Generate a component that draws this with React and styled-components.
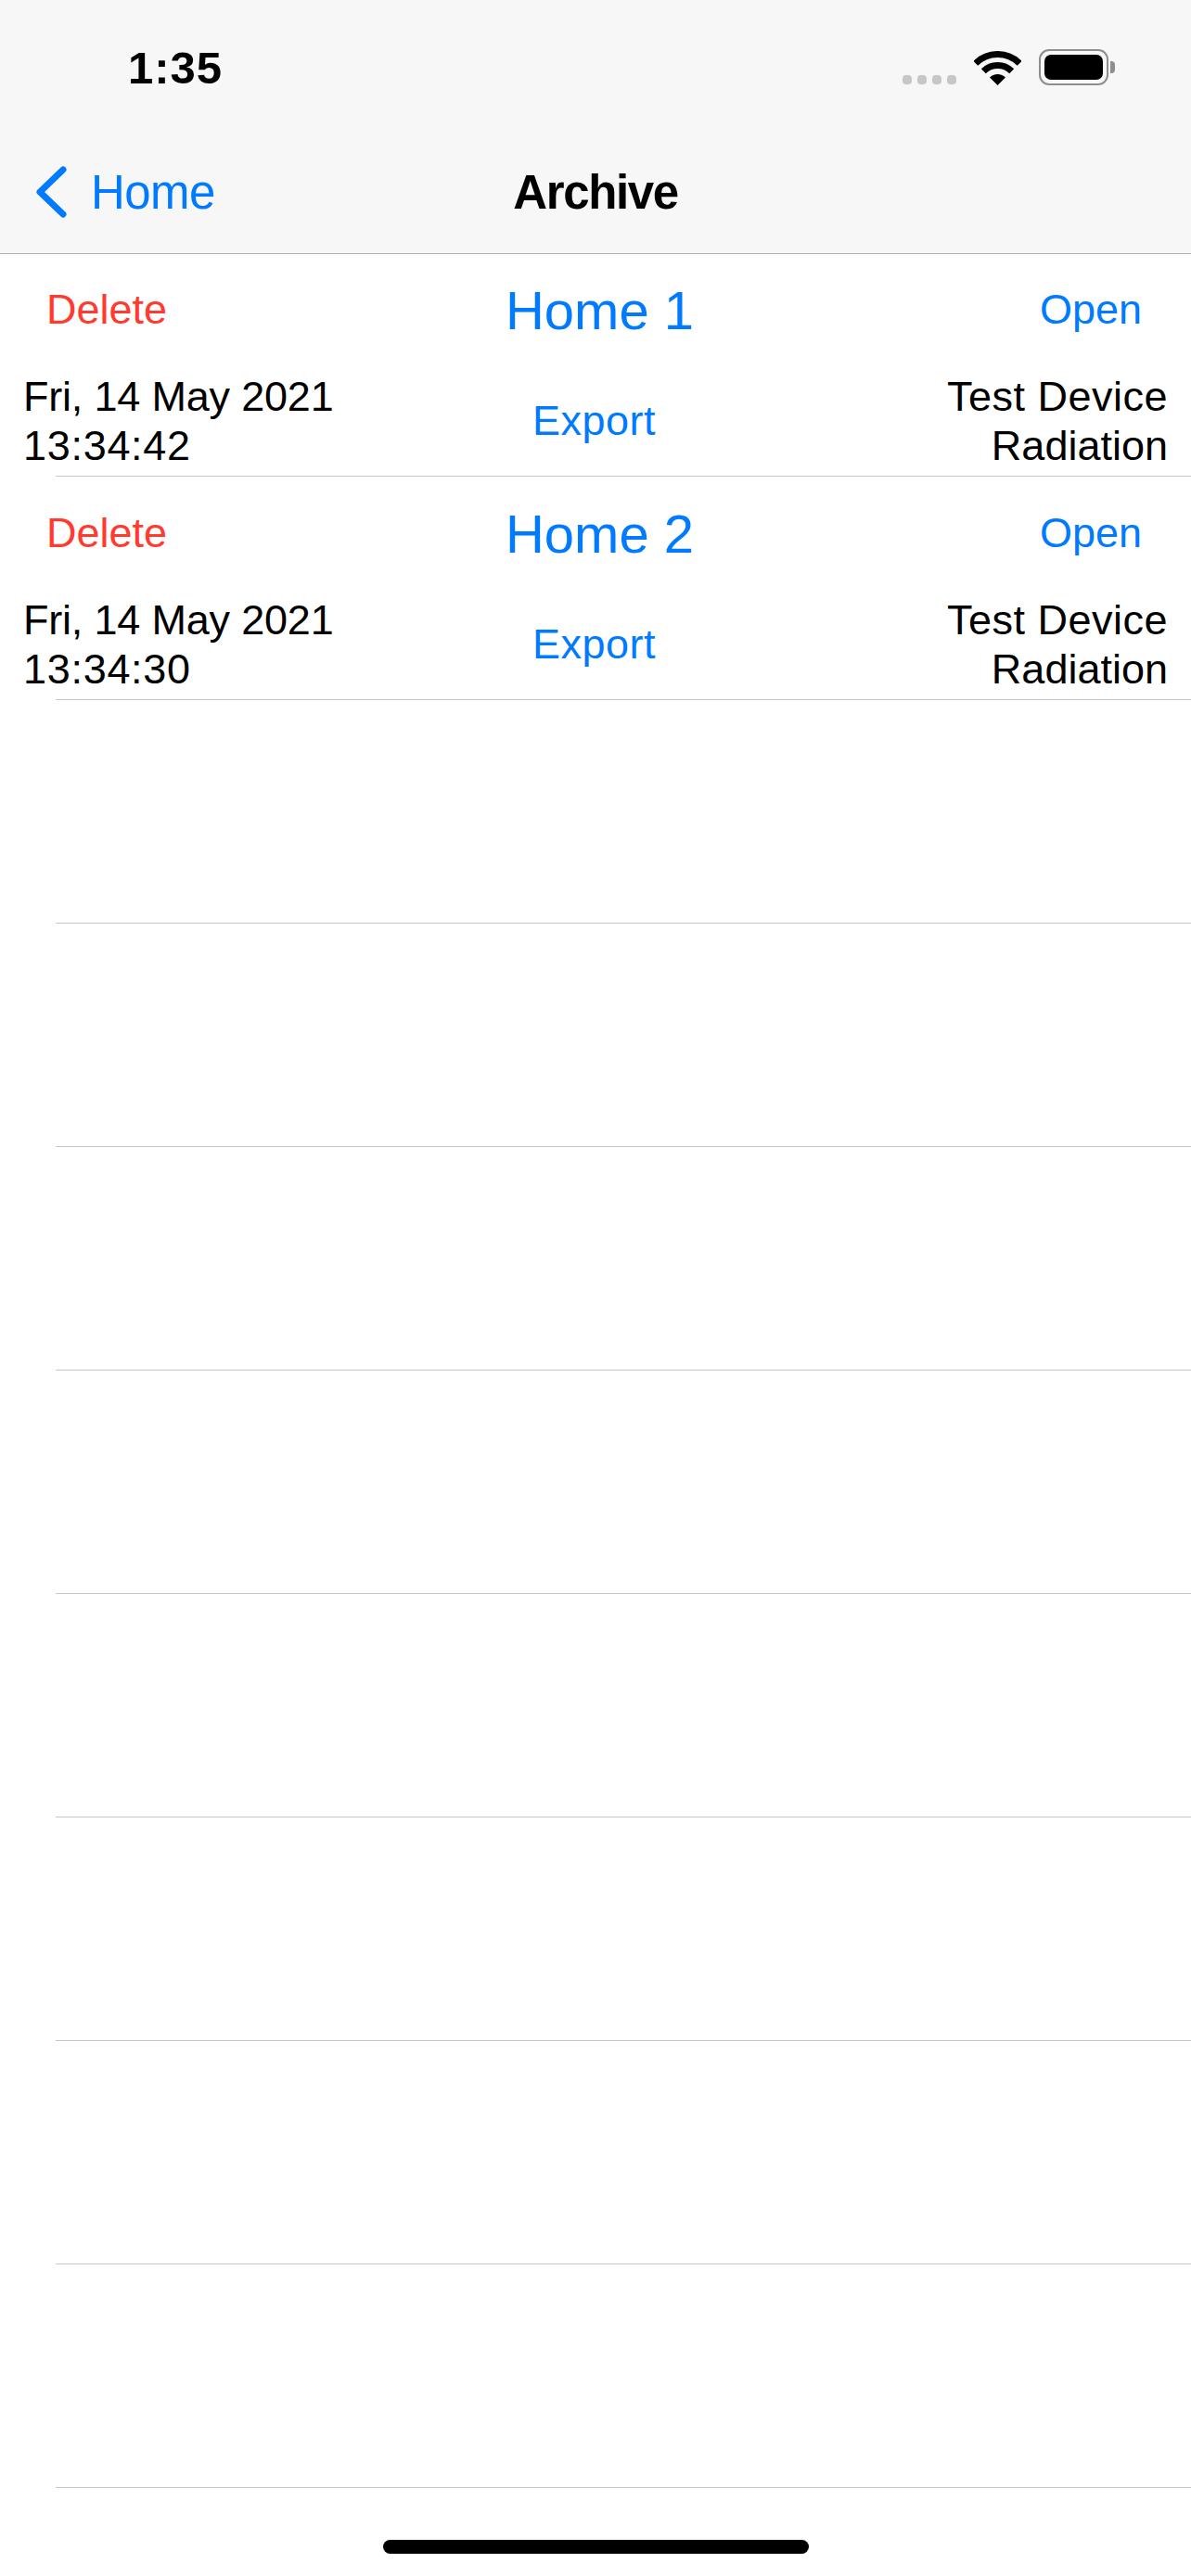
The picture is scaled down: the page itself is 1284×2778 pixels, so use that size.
import React from "react";
import styled, { createGlobalStyle } from "styled-components";

const archives = [
  { name: "Home 1", date: "Fri, 14 May 2021", time: "13:34:42" },
  { name: "Home 2", date: "Fri, 14 May 2021", time: "13:34:30" },
];

const EMPTY_ROWS = 8;

const App = () => {
  return (
    <>
      <GlobalStyle />
      <Screen>
        <Header>
          <StatusBar>
            <Clock>1:35</Clock>
            <StatusIcons>
              <SignalDots>
                <Dot />
                <Dot />
                <Dot />
                <Dot />
              </SignalDots>
              <WifiIcon />
              <Battery>
                <BatteryFill />
              </Battery>
              <BatteryCap />
            </StatusIcons>
          </StatusBar>
          <NavBar>
            <BackButton>
              <Chevron />
              <span>Home</span>
            </BackButton>
            <NavTitle>Archive</NavTitle>
          </NavBar>
        </Header>

        <List>
          {archives.map((el) => (
            <Row key={el.name}>
              <TopLine>
                <Action $danger>Delete</Action>
                <Title>{el.name}</Title>
                <OpenAction>Open</OpenAction>
              </TopLine>
              <BottomLine>
                <Info>
                  <DateText>{el.date}</DateText>
                  <br />
                  <TimeText>{el.time}</TimeText>
                </Info>
                <ExportAction>Export</ExportAction>
                <Info $right>
                  <DeviceText>Test Device</DeviceText>
                  <br />
                  Radiation
                </Info>
              </BottomLine>
              <Separator />
            </Row>
          ))}

          {Array.from({ length: EMPTY_ROWS }, (_, i) => (
            <Row key={i}>
              <EmptyBody />
              <Separator />
            </Row>
          ))}
        </List>

        <HomeIndicator />
      </Screen>
    </>
  );
};

const WifiIcon = () => (
  <WifiSvg viewBox="0 0 51 37" fill="none">
    <path d="M1.81 13.31A33.5 33.5 0 0 1 49.19 13.31" stroke="#000" strokeWidth="7" />
    <path d="M10.3 21.8A21.5 21.5 0 0 1 40.7 21.8" stroke="#000" strokeWidth="7" />
    <path d="M25.5 37L17 28.5A12 12 0 0 1 34 28.5Z" fill="#000" />
  </WifiSvg>
);

const Chevron = () => (
  <ChevronSvg viewBox="0 0 34 58" fill="none">
    <path
      d="M29 5L4 29L29 53"
      stroke="#007aff"
      strokeWidth="7"
      strokeLinecap="round"
      strokeLinejoin="round"
    />
  </ChevronSvg>
);

const GlobalStyle = createGlobalStyle`
  html, body {
    margin: 0;
    padding: 0;
    background: #fff;
    overflow: hidden;
  }
  * {
    box-sizing: border-box;
  }
`;

const Screen = styled.div`
  position: relative;
  width: 1284px;
  height: 2778px;
  overflow: hidden;
  background: #fff;
  font-family: "Liberation Sans", Arial, sans-serif;
  color: #000;
`;

const Header = styled.header`
  height: 274px;
  background: #f7f7f7;
  border-bottom: 1px solid #b2b2b2;
`;

const StatusBar = styled.div`
  height: 132px;
  display: flex;
  justify-content: space-between;
  align-items: flex-start;
  padding: 45px 82px 0 138px;
`;

const Clock = styled.div`
  font-size: 49px;
  line-height: 56px;
  font-weight: 700;
  letter-spacing: 1px;
`;

const StatusIcons = styled.div`
  display: flex;
  align-items: flex-end;
  padding-top: 8px;
`;

const SignalDots = styled.div`
  display: flex;
  gap: 6px;
  margin-right: 19px;
  margin-bottom: 1px;
`;

const Dot = styled.div`
  width: 10px;
  height: 10px;
  border-radius: 4px;
  background: #c6c6c6;
`;

const WifiSvg = styled.svg`
  width: 51px;
  height: 37px;
  margin-right: 19px;
`;

const Battery = styled.div`
  width: 75px;
  height: 39px;
  padding: 4px;
  border: 2px solid #8e8e8e;
  border-radius: 11px;
`;

const BatteryFill = styled.div`
  height: 100%;
  background: #000;
  border-radius: 7px;
`;

const BatteryCap = styled.div`
  width: 5px;
  height: 13px;
  margin: 0 0 13px 2px;
  background: #8e8e8e;
  border-radius: 0 4px 4px 0;
`;

const NavBar = styled.nav`
  height: 141px;
  display: grid;
  grid-template-columns: 1fr auto 1fr;
  align-items: center;
  padding: 9px 0 0 39px;
`;

const BackButton = styled.div`
  display: flex;
  align-items: center;
  gap: 24px;
  font-size: 51px;
  letter-spacing: -0.6px;
  color: #007aff;
`;

const ChevronSvg = styled.svg`
  width: 34px;
  height: 58px;
  margin-right: 1px;
`;

const NavTitle = styled.div`
  font-size: 51px;
  font-weight: 700;
  letter-spacing: -1.4px;
  margin-right: 39px;
`;

const List = styled.main`
  margin-top: -1px;
`;

const Row = styled.section`
  display: flex;
  flex-direction: column;
`;

const TopLine = styled.div`
  height: 120px;
  display: grid;
  grid-template-columns: 1fr auto 1fr;
  align-items: center;
  padding: 2px 53px 0 50px;
`;

const BottomLine = styled.div`
  height: 120px;
  display: grid;
  grid-template-columns: 1fr auto 1fr;
  align-items: center;
  padding: 2px 25px 0;
`;

const EmptyBody = styled.div`
  height: 240px;
`;

const Action = styled.div`
  font-size: 45px;
  color: ${({ $danger }) => ($danger ? "#ff3b30" : "#007aff")};
`;

const OpenAction = styled(Action)`
  text-align: right;
`;

const ExportAction = styled(Action)`
  letter-spacing: 0.5px;
  padding-right: 3px;
`;

const Title = styled.div`
  font-size: 58px;
  padding-left: 12px;
  color: #007aff;
`;

const Info = styled.div`
  font-size: 45px;
  line-height: 53px;
  text-align: ${({ $right }) => ($right ? "right" : "left")};
`;

const DateText = styled.span`
  letter-spacing: -0.2px;
`;

const TimeText = styled.span`
  letter-spacing: 0.7px;
`;

const DeviceText = styled.span`
  letter-spacing: 0.5px;
`;

const Separator = styled.div`
  height: 1px;
  margin-left: 60px;
  background: #c6c6c8;
`;

const HomeIndicator = styled.div`
  position: absolute;
  left: 413px;
  bottom: 24px;
  width: 459px;
  height: 15px;
  border-radius: 8px;
  background: #000;
`;

export default App;
